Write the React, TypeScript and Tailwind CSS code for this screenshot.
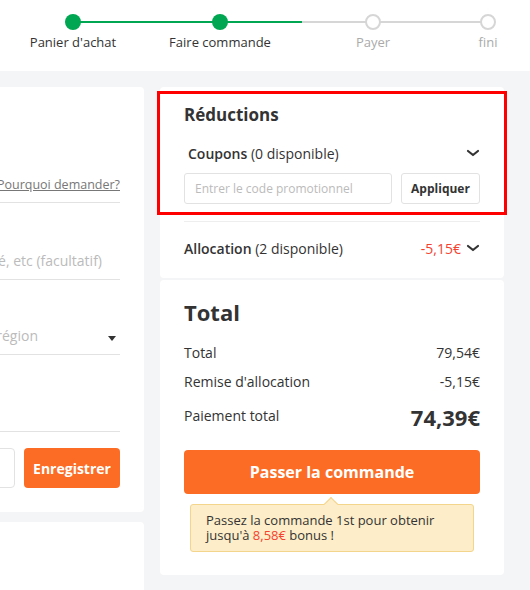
import React from 'react';

function Chevron({ className = '' }: { className?: string }) {
  return (
    <svg width="14" height="10" viewBox="0 0 14 10" className={className}>
      <path d="M2 3l5 4 5-4" fill="none" stroke="#333" strokeWidth="2.2" strokeLinecap="round" strokeLinejoin="round" />
    </svg>
  );
}

function Steps() {
  return (
    <div className="relative h-[71px] bg-white">
      {/* progress line */}
      <div className="absolute left-[73px] top-[21px] h-[2px] w-[229px] bg-[#00a651]" />
      <div className="absolute left-[302px] top-[21px] h-[2px] w-[186px] bg-[#d6d6d6]" />

      <div className="relative flex pl-[13px] pt-[14px]">
        <div className="flex w-[120px] flex-col items-center">
          <span className="h-4 w-4 rounded-full bg-[#00a651]" />
          <span className="mt-[3px] text-[13px] leading-[18px] text-[#333]">Panier d'achat</span>
        </div>
        <div className="ml-[27px] flex w-[120px] flex-col items-center">
          <span className="h-4 w-4 rounded-full bg-[#00a651]" />
          <span className="mt-[3px] text-[13px] leading-[18px] text-[#333]">Faire commande</span>
        </div>
        <div className="ml-[33px] flex w-[120px] flex-col items-center">
          <span className="h-4 w-4 rounded-full border-2 border-[#d6d6d6] bg-white" />
          <span className="mt-[3px] text-[13px] leading-[18px] text-[#aaa]">Payer</span>
        </div>
        <div className="ml-[35px] flex w-[40px] flex-col items-center">
          <span className="h-4 w-4 rounded-full border-2 border-[#d6d6d6] bg-white" />
          <span className="mt-[3px] text-[13px] leading-[18px] text-[#aaa]">fini</span>
        </div>
      </div>
    </div>
  );
}

function AddressCard() {
  return (
    <div className="flex flex-col">
      <div className="rounded-[4px] bg-white pb-6 pl-6 pr-6 pt-[80px]">
        <div className="flex h-[36px] items-end justify-end border-b border-[#e2e2e2] pb-2">
          <span className="whitespace-nowrap text-[12.5px] leading-[18px] text-[#777] underline">Pourquoi demander?</span>
        </div>
        <div className="mt-[40px] flex h-[37px] items-end justify-end border-b border-[#e2e2e2] pb-2 pr-[18px]">
          <span className="whitespace-nowrap text-[14px] leading-[20px] text-[#bbb]">Appartement, suite, unité, etc (facultatif)</span>
        </div>
        <div className="mt-[38px] flex h-[37px] items-end justify-between border-b border-[#e2e2e2] pb-2 pr-1">
          <span className="w-[214px] whitespace-nowrap text-right text-[14px] leading-[20px] text-[#bbb]">Sélectionnez une région</span>
          <svg width="8" height="5" viewBox="0 0 8 5" className="mb-[5px]">
            <path d="M0 0h8L4 5z" fill="#333" />
          </svg>
        </div>
        <div className="mt-[40px] h-[37px] border-b border-[#e2e2e2]" />
        <div className="mt-4 flex justify-end gap-[9px]">
          <button className="h-[40px] w-[120px] rounded-[4px] border border-[#e2e2e2] bg-white text-[14px] font-bold text-[#333]">Annuler</button>
          <button className="h-[40px] w-[96px] rounded-[4px] bg-[#fd6c24] text-[14px] font-bold text-white">Enregistrer</button>
        </div>
      </div>
      <div className="mt-[10px] h-[100px] rounded-[4px] bg-white" />
    </div>
  );
}

function DiscountCard() {
  return (
    <div className="rounded-[4px] bg-white pb-5 pt-[4px]">
      {/* highlighted coupons block */}
      <div className="-mx-[3px] border-[3px] border-[#ff0000] px-6 pb-2 pt-[9px]">
        <h2 className="text-[17px] font-bold leading-[24px] text-[#333]">Réductions</h2>
        <div className="mt-4 flex h-5 items-center justify-between pl-1">
          <span className="text-[14px] text-[#333]">
            <span className="font-semibold">Coupons</span> (0 disponible)
          </span>
          <Chevron />
        </div>
        <div className="mt-[10px] flex gap-[9px]">
          <div className="flex h-[31px] w-[208px] items-center rounded-[3px] border border-[#e2e2e2] px-[10px] text-[12px] text-[#bbb]">
            Entrer le code promotionnel
          </div>
          <button className="h-[31px] flex-1 rounded-[3px] border border-[#e2e2e2] bg-white text-[12px] font-bold text-[#333]">
            Appliquer
          </button>
        </div>
      </div>
      <div className="px-6">
        <div className="mt-[6px] border-t border-[#eee]" />
        <div className="mt-4 flex h-5 items-center justify-between">
          <span className="text-[14px] text-[#333]">
            <span className="font-semibold">Allocation</span> (2 disponible)
          </span>
          <span className="flex items-center gap-[5px]">
            <span className="text-[14px] text-[#f5422f]">-5,15€</span>
            <Chevron />
          </span>
        </div>
      </div>
    </div>
  );
}

function TotalCard() {
  return (
    <div className="mt-[2px] rounded-[4px] bg-white px-6 pb-[23px] pt-[17px]">
      <h2 className="text-[22px] font-bold leading-[30px] text-[#333]">Total</h2>
      <div className="mt-[15px] flex h-5 items-center justify-between text-[14px] text-[#333]">
        <span>Total</span>
        <span>79,54€</span>
      </div>
      <div className="mt-[9px] flex h-5 items-center justify-between text-[14px] text-[#333]">
        <span>Remise d'allocation</span>
        <span>-5,15€</span>
      </div>
      <div className="mt-[11px] flex h-[30px] items-center justify-between text-[#333]">
        <span className="-mt-[4px] text-[14px]">Paiement total</span>
        <span className="text-[22px] font-bold">74,39€</span>
      </div>
      <button className="mt-[18px] h-[44px] w-full rounded-[4px] bg-[#fd6c24] text-[16px] font-bold text-white">
        Passer la commande
      </button>
      <div className="relative mx-[6px] mt-[10px] rounded-[3px] border border-[#f3d58c] bg-[#fdedc8] py-[8px] pl-[15px] text-[13px] leading-[15px] text-[#333]">
        <span className="absolute -top-[6px] left-[135px] h-[10px] w-[10px] rotate-45 border-l border-t border-[#f3d58c] bg-[#fdedc8]" />
        Passez la commande 1st pour obtenir
        <br />
        jusqu'à <span className="text-[#f5422f]">8,58€</span> bonus !
      </div>
    </div>
  );
}

export default function App() {
  return (
    <div className="h-[590px] w-[530px] overflow-hidden bg-[#f4f5f7] font-['Open_Sans',sans-serif]">
      <Steps />
      <div className="flex gap-4 pt-4">
        <div className="-ml-[200px] w-[344px] shrink-0">
          <AddressCard />
        </div>
        <div className="w-[344px] shrink-0">
          <DiscountCard />
          <TotalCard />
        </div>
      </div>
    </div>
  );
}
